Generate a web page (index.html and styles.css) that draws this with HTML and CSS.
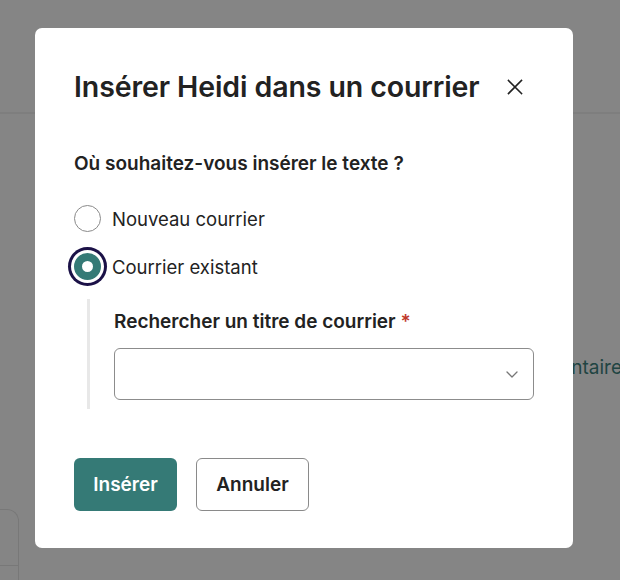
FILE: index.html
```html
<!DOCTYPE html>
<html lang="fr">
<head>
<meta charset="utf-8">
<title>Insérer Heidi dans un courrier</title>
<link rel="stylesheet" href="styles.css">
</head>
<body>
<div class="page">
  <div class="page-header"></div>
  <div class="page-body">
    <div class="side-card"><div class="side-card-row"></div></div>
    <div class="page-link">Commentaire</div>
  </div>
</div>

<div class="overlay">
  <div class="modal" role="dialog" aria-labelledby="dlg-title">
    <div class="modal-head">
      <h1 id="dlg-title" class="modal-title">Insérer Heidi dans un courrier</h1>
      <button class="close-btn" aria-label="Fermer">
        <svg width="16" height="16" viewBox="0 0 16 16" fill="none" stroke="#222" stroke-width="1.6" stroke-linecap="square">
          <path d="M1.5 1.5 L14.5 14.5 M14.5 1.5 L1.5 14.5"/>
        </svg>
      </button>
    </div>

    <p class="question">Où souhaitez-vous insérer le texte ?</p>

    <div class="radios">
      <label class="radio-row">
        <span class="radio"></span>
        <span class="radio-label">Nouveau courrier</span>
      </label>
      <label class="radio-row">
        <span class="radio radio-checked"></span>
        <span class="radio-label">Courrier existant</span>
      </label>
    </div>

    <div class="nested">
      <div class="field-label">Rechercher un titre de courrier <span class="req">*</span></div>
      <div class="select">
        <svg class="chevron" width="12" height="7" viewBox="0 0 12 7" fill="none" stroke="#777" stroke-width="1.3" stroke-linecap="round" stroke-linejoin="round">
          <path d="M1 1 L6 6 L11 1"/>
        </svg>
      </div>
    </div>

    <div class="actions">
      <button class="btn btn-primary">Insérer</button>
      <button class="btn btn-secondary">Annuler</button>
    </div>
  </div>
</div>
</body>
</html>
```

FILE: styles.css
```css
* { box-sizing: border-box; }

html, body {
  margin: 0;
  padding: 0;
  width: 620px;
  height: 580px;
  overflow: hidden;
  font-family: Inter, "Noto Sans", "Liberation Sans", sans-serif;
  color: #222;
  background: #fff;
}

/* background application (under the overlay) */
.page {
  width: 620px;
  height: 580px;
  overflow: hidden;
  background: #fff;
}
.page-header {
  height: 114px;
  border-bottom: 2px solid #f1f1f1;
}
.page-body {
  position: relative;
  height: 466px;
  overflow: hidden;
}
.side-card {
  position: absolute;
  left: 0;
  top: 395px;
  width: 19px;
  height: 71px;
  border: 1.5px solid #e6e6e6;
  border-left: 0;
  border-bottom: 0;
  border-radius: 0 12px 0 0;
}
.side-card-row {
  margin-top: 55px;
  border-top: 1.5px solid #e6e6e6;
}
.page-link {
  position: absolute;
  right: -2px;
  top: 242px;
  font-size: 19px;
  color: #3f8480;
  white-space: nowrap;
}

/* overlay and modal */
.overlay {
  position: fixed;
  inset: 0;
  background: rgba(0, 0, 0, 0.48);
  display: flex;
  align-items: flex-start;
  padding: 28px 0 0 35px;
}
.modal {
  width: 538px;
  height: 520px;
  background: #fff;
  border-radius: 7px;
  padding: 30px 39px 37px 39px;
  display: flex;
  flex-direction: column;
}

.modal-head {
  display: flex;
  align-items: center;
  justify-content: space-between;
}
.modal-title {
  margin: 0;
  font-size: 28.5px;
  line-height: 58px;
  font-weight: 600;
  letter-spacing: -0.1px;
  color: #222;
}
.close-btn {
  width: 38px;
  height: 38px;
  border: 0;
  background: transparent;
  padding: 0;
  display: flex;
  align-items: center;
  justify-content: center;
}

.question {
  margin: 36px 0 0 0;
  font-size: 19px;
  line-height: 24px;
  font-weight: 600;
  color: #222;
}

.radios {
  margin-top: 29px;
  display: flex;
  flex-direction: column;
  gap: 21px;
}
.radio-row {
  display: flex;
  align-items: center;
  gap: 11px;
  height: 27px;
}
.radio {
  width: 27px;
  height: 27px;
  border-radius: 50%;
  border: 1px solid #8a8a8a;
  background: #fff;
  flex: none;
}
.radio-checked {
  border: 8px solid #357a76;
  box-shadow: 0 0 0 3px #fff, 0 0 0 6px #1b1147;
}
.radio-label {
  font-size: 18.5px;
  line-height: 24px;
  color: #222;
}

.nested {
  margin-top: 19px;
  margin-left: 13px;
  border-left: 3px solid #e8e8e8;
  padding: 11px 0 9px 24px;
}
.field-label {
  font-size: 19px;
  line-height: 24px;
  font-weight: 600;
  color: #222;
}
.req { color: #c0392b; }
.select {
  margin-top: 14px;
  height: 52px;
  border: 1px solid #8c8c8c;
  border-radius: 6px;
  display: flex;
  align-items: center;
  justify-content: flex-end;
  padding-right: 15px;
}

.actions {
  margin-top: auto;
  display: flex;
  gap: 19px;
}
.btn {
  height: 53px;
  border-radius: 6px;
  font-family: inherit;
  font-size: 19px;
  font-weight: 600;
  padding: 0 18px;
}
.btn-primary {
  background: #357a76;
  color: #fff;
  border: 0;
  width: 103px;
}
.btn-secondary {
  background: #fff;
  color: #222;
  border: 1px solid #8a8a8a;
  width: 113px;
}
```
